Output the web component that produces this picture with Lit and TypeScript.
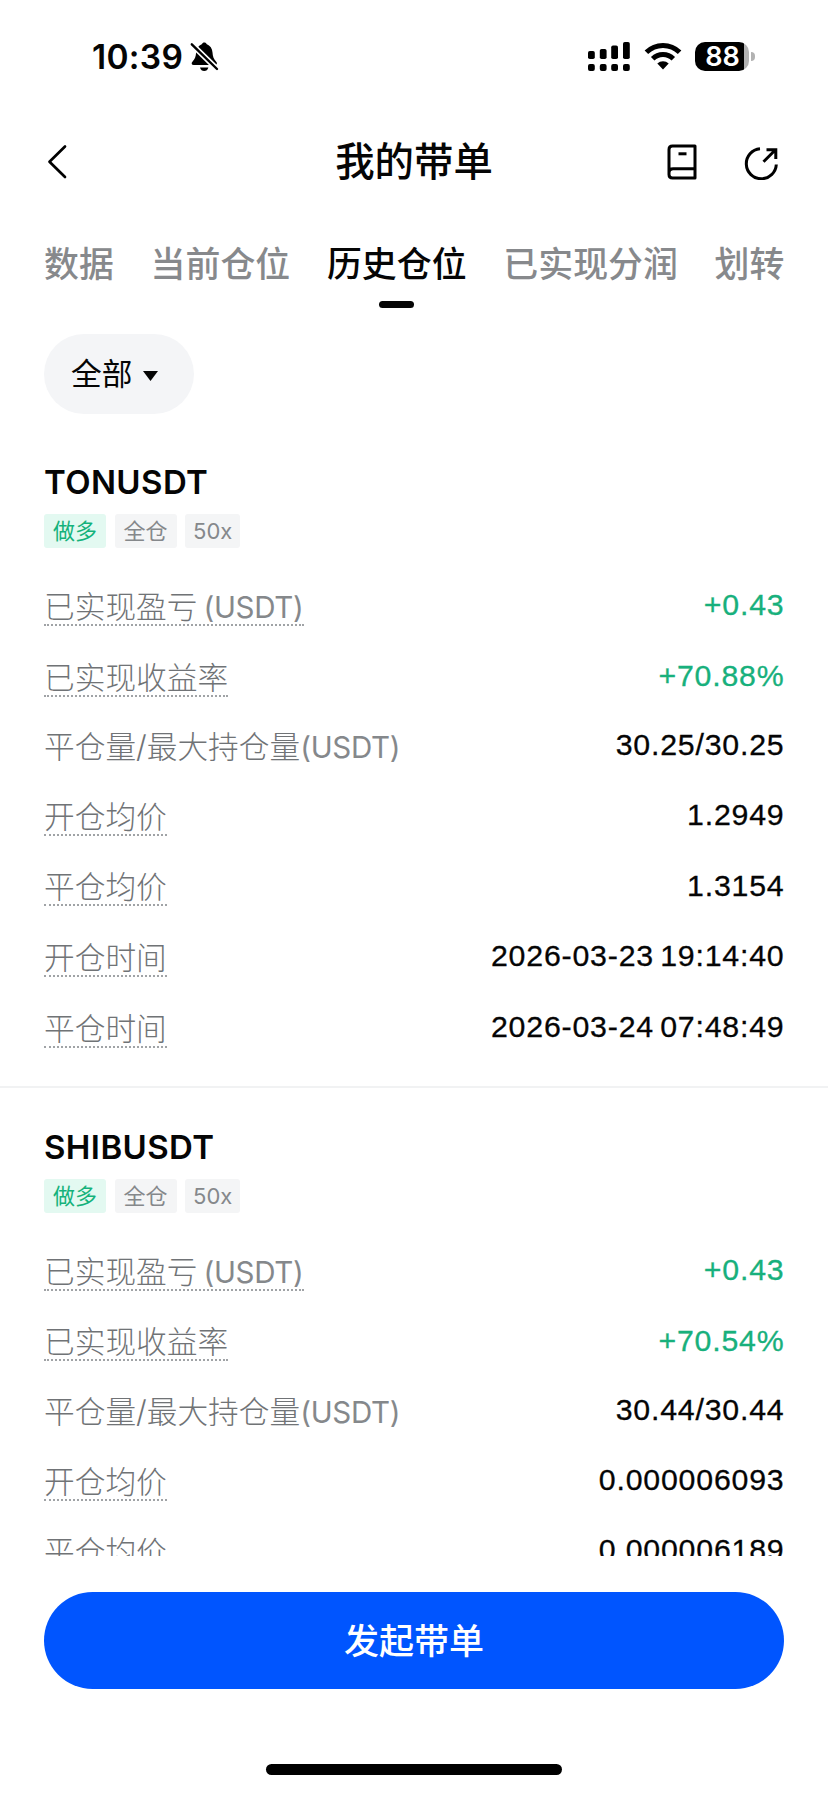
import { LitElement, html, css, nothing } from "lit";
import { customElement, property } from "lit/decorators.js";
import { classMap } from "lit/directives/class-map.js";

interface Field {
  label: string;
  unit?: string;
  value: string;
  hint: boolean;
  gain?: boolean;
}

interface Position {
  symbol: string;
  fields: Field[];
}

const TABS = ["数据", "当前仓位", "历史仓位", "已实现分润", "划转"];

const makePosition = (symbol: string, v: string[]): Position => ({
  symbol,
  fields: [
    { label: "已实现盈亏", unit: " (USDT)", value: v[0], hint: true, gain: true },
    { label: "已实现收益率", value: v[1], hint: true, gain: true },
    { label: "平仓量/最大持仓量", unit: "(USDT)", value: v[2], hint: false },
    { label: "开仓均价", value: v[3], hint: true },
    { label: "平仓均价", value: v[4], hint: true },
    ...(v[5] ? [{ label: "开仓时间", value: v[5], hint: true }] : []),
    ...(v[6] ? [{ label: "平仓时间", value: v[6], hint: true }] : []),
  ],
});

const POSITIONS: Position[] = [
  makePosition("TONUSDT", [
    "+0.43", "+70.88%", "30.25/30.25", "1.2949", "1.3154",
    "2026-03-23 19:14:40", "2026-03-24 07:48:49",
  ]),
  makePosition("SHIBUSDT", [
    "+0.43", "+70.54%", "30.44/30.44", "0.000006093", "0.000006189",
  ]),
];

@customElement("status-bar")
class StatusBar extends LitElement {
  static styles = css`
    :host { display: flex; height: 112px; box-sizing: border-box; padding: 37px 73px 0 92px; justify-content: space-between; align-items: flex-start; }
    .left { display: flex; align-items: center; height: 40px; gap: 7px; }
    .time { font: 600 33.5px/40px Inter, sans-serif; letter-spacing: 0.3px; }
    .right { display: flex; align-items: center; height: 38px; }
    .wifi { margin-left: 14px; }
    .battery { margin-left: 13px; display: flex; align-items: center; gap: 2px; }
    .cell { width: 54px; height: 29px; border-radius: 10px; background: linear-gradient(to right, #000 49px, #b2b2b2 49px); color: #fff; font: 600 27px/29px Inter, sans-serif; }
    .level { display: block; width: 55px; text-align: center; }
    .nub { width: 4px; height: 9px; border-radius: 0 4px 4px 0; background: #b2b2b2; }
    svg { display: block; }
  `;
  render() {
    return html`
      <div class="left">
        <span class="time">10:39</span>
        <svg width="29" height="30" viewBox="0 0 29 30">
          <path d="M14.300.5c1.200 0 1.900.5 2.200 1.500 3.700 1.500 5.800 4.500 6 8.500.2 4.200 1.300 6.700 3.700 9.200 1.300 1.400.8 3.400-1.300 3.400H3.700c-2.100 0-2.600-2-1.300-3.400 2.400-2.500 3.500-5 3.700-9.200.2-4 2.300-7 6-8.500.3-1 1-1.500 2.200-1.500Z" />
          <path d="M10 25.400h8.400c-.7 2.200-2.100 3.600-4.200 3.600S10.700 27.600 10 25.400Z" />
          <path d="M1.500 2L28 28" stroke="#fff" stroke-width="5.600" />
          <path d="M1.800 2.300L27 27" stroke="#000" stroke-width="2.400" stroke-linecap="round" />
        </svg>
      </div>
      <div class="right">
        <svg width="42" height="29" viewBox="0 0 42 29">
          <rect x="0" y="9" width="6.800" height="8" rx="1.800" /><rect x="11.800" y="7" width="6.800" height="10" rx="1.800" />
          <rect x="23.200" y="3.500" width="6.800" height="13.500" rx="1.800" /><rect x="35" y="0" width="6.800" height="17" rx="1.800" />
          <rect x="0" y="22" width="6.800" height="7" rx="2" /><rect x="11.800" y="22" width="6.800" height="7" rx="2" />
          <rect x="23.200" y="22" width="6.800" height="7" rx="2" /><rect x="35" y="22" width="6.800" height="7" rx="2" />
        </svg>
        <svg class="wifi" width="38" height="28" viewBox="0 0 38 28">
          <path d="M2.400 10.300a23.500 23.500 0 0 1 33.200 0" fill="none" stroke="#000" stroke-width="5" />
          <path d="M8.700 16.700a14.600 14.600 0 0 1 20.600 0" fill="none" stroke="#000" stroke-width="5" />
          <path d="M13.300 21.600a8.200 8.200 0 0 1 11.400 0L19 27.400Z" />
        </svg>
        <div class="battery">
          <div class="cell"><span class="level">88</span></div>
          <div class="nub"></div>
        </div>
      </div>
    `;
  }
}

@customElement("page-header")
class PageHeader extends LitElement {
  static styles = css`
    :host { display: grid; grid-template-columns: 1fr auto 1fr; align-items: center; height: 100px; padding: 0 50px 0 50px; }
    .back { margin-left: -6px; }
    .title { font: 500 39.400px/56px "Noto Sans CJK SC", sans-serif; padding-bottom: 7px; }
    .actions { display: flex; justify-content: flex-end; gap: 47px; }
    svg { display: block; fill: none; stroke: #000; stroke-width: 3; }
  `;
  render() {
    return html`
      <svg class="back" width="26" height="36" viewBox="0 0 26 36"><path d="M21 2.500L5.500 17.700L21 33" stroke-width="2.700" stroke-linecap="round" stroke-linejoin="round" /></svg>
      <div class="title">我的带单</div>
      <div class="actions">
        <svg width="30" height="36" viewBox="0 0 30 36">
          <path d="M28 24.700V2H5.500Q2 2 2 5.500V30.500Q2 34 5.500 34H28V24.700H6.200Q2 24.700 2 29" stroke-linejoin="round" />
          <path d="M11.500 9.800h8" />
        </svg>
        <svg width="34" height="36" viewBox="0 0 34 36">
          <path d="M16 4.800A15 15 0 1 0 32.300 20.500" />
          <path d="M19.500 17.800L31 6.300M22.500 5.700H31.800V15" />
        </svg>
      </div>
    `;
  }
}

@customElement("position-card")
class PositionCard extends LitElement {
  @property({ attribute: false }) position!: Position;
  static styles = css`
    :host { display: block; padding: 39px 44px 24.400px; border-bottom: 2px solid #f1f2f3; }
    .symbol { font: 600 33px/40px Inter, sans-serif; letter-spacing: 0.400px; }
    .tags { display: flex; gap: 8.500px; margin: 12px 0 21.200px; }
    .tag { height: 34px; border-radius: 3px; padding: 0 9px; background: #f4f5f6; color: #85888b; font: 400 22px/34px Inter, "Noto Sans CJK SC", sans-serif; }
    .tag.long { background: #e3f9f1; color: #14b27b; }
    .tag.leverage { padding: 0 8px; }
    .row { display: flex; justify-content: space-between; align-items: center; height: 70.600px; }
    .row.plain { height: 68.600px; }
    .label { color: #707376; font: 300 30.700px/34px Inter, "Noto Sans CJK SC", sans-serif; padding-top: 5px; white-space: pre; }
    .unit { font-size: 29.500px; font-weight: 400; color: #85888b; letter-spacing: -0.300px; word-spacing: -2px; }
    .hint { border-bottom: 2px dotted #a0a3a6; margin-top: 2px; }
    .value { font: 400 30.300px/40px "Liberation Sans", sans-serif; letter-spacing: 0.800px; word-spacing: -3px; margin-right: -0.500px; padding-top: 1.500px; -webkit-text-stroke: 0.300px currentColor; }
    .gain { color: #18b07c; }
  `;
  render() {
    const p = this.position;
    return html`
      <div class="symbol">${p.symbol}</div>
      <div class="tags">
        <span class="tag long">做多</span><span class="tag">全仓</span><span class="tag leverage">50x</span>
      </div>
      ${p.fields.map(
        (f) => html`<div class=${classMap({ row: true, plain: !f.hint })}>
          <span class=${classMap({ label: true, hint: f.hint })}>${f.label}${f.unit ? html`<span class="unit">${f.unit}</span>` : nothing}</span>
          <span class=${classMap({ value: true, gain: !!f.gain })}>${f.value}</span>
        </div>`
      )}
    `;
  }
}

@customElement("app-root")
class AppRoot extends LitElement {
  static styles = css`
    :host { display: flex; flex-direction: column; height: 1793px; background: #fff; color: #050505; overflow: hidden; font-family: Inter, "Noto Sans CJK SC", sans-serif; }
    status-bar, page-header { flex: none; }
    .tabs { display: flex; gap: 36.800px; padding: 24px 0 0 44px; height: 98px; box-sizing: border-box; white-space: nowrap; }
    .tab { display: flex; flex-direction: column; align-items: center; gap: 13px; font: 500 34.900px/52px "Noto Sans CJK SC", sans-serif; color: #87898c; }
    .tab.active { color: #050505; }
    .bar { width: 35px; height: 7px; border-radius: 4px; background: #050505; }
    .filter { display: flex; align-items: center; gap: 11px; box-sizing: border-box; width: 150px; height: 80px; margin: 24px 0 9px 44px; padding-left: 27px; border-radius: 40px; background: #f4f5f7; font: 400 30.700px/44px "Noto Sans CJK SC", sans-serif; }
    .filter-text { padding-bottom: 4px; }
    .arrow { margin-top: 3px; }
    .list { height: 1133.300px; overflow: hidden; flex: none; }
    .footer { flex: 1; display: flex; flex-direction: column; align-items: center; padding: 35.700px 44px 0; }
    .cta { align-self: stretch; height: 97px; border: 0; border-radius: 49px; background: #0055ff; color: #fff; font: 500 35px/94px "Noto Sans CJK SC", sans-serif; text-align: center; padding: 0 0 3px; }
    .home { width: 296px; height: 11px; border-radius: 6px; background: #000; margin-top: 75px; }
  `;
  render() {
    return html`
      <status-bar></status-bar>
      <page-header></page-header>
      <nav class="tabs">
        ${TABS.map((t, i) => html`<div class=${classMap({ tab: true, active: i === 2 })}>${t}${i === 2 ? html`<span class="bar"></span>` : nothing}</div>`)}
      </nav>
      <div class="filter">
        <span class="filter-text">全部</span>
        <svg class="arrow" width="15" height="10" viewBox="0 0 15 10"><path d="M0 0H15L7.500 10Z" fill="#050505" /></svg>
      </div>
      <main class="list">${POSITIONS.map((p) => html`<position-card .position=${p}></position-card>`)}</main>
      <div class="footer">
        <button class="cta">发起带单</button>
        <div class="home"></div>
      </div>
    `;
  }
}
